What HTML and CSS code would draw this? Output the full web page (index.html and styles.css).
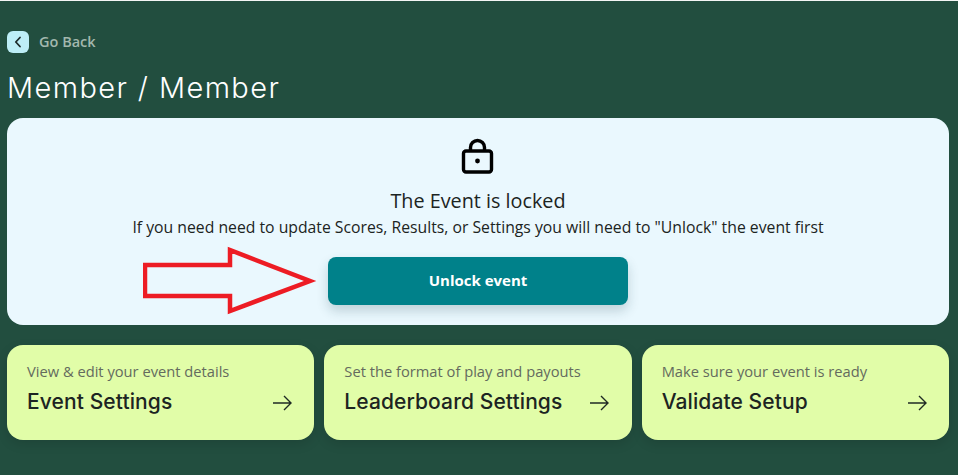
FILE: index.html
```html
<!DOCTYPE html>
<html lang="en">
<head>
    <meta charset="UTF-8">
    <meta name="viewport" content="width=device-width, initial-scale=1.0">
    <title>Member / Member</title>
    <link rel="stylesheet" href="styles.css">
</head>
<body>
    <main>
        <a href="#" class="go-back">
            <span class="back-icon">
                <svg width="10" height="12" viewBox="0 0 10 12"><path d="M7 1.5 2.8 6 7 10.5" fill="none" stroke="#1d2b2b" stroke-width="1.8" stroke-linecap="round" stroke-linejoin="round"/></svg>
            </span>
            Go Back
        </a>
        <h1>Member / Member</h1>

        <section class="locked-panel">
            <svg class="lock-icon" width="34" height="38" viewBox="0 0 34 38">
                <rect x="2.5" y="13" width="28" height="21" rx="2.5" fill="none" stroke="#000" stroke-width="3.4"/>
                <path d="M9.5 13V9.5a7 7 0 0 1 14 0V13" fill="none" stroke="#000" stroke-width="3.4"/>
                <circle cx="16.5" cy="23" r="2.4" fill="#000"/>
            </svg>
            <h2>The Event is locked</h2>
            <p>If you need need to update Scores, Results, or Settings you will need to "Unlock" the event first</p>
            <button class="unlock-btn">Unlock event</button>
            <!-- red arrow drawn over the screenshot -->
            <svg class="red-arrow" width="178" height="70" viewBox="0 0 178 70">
                <path d="M2 19H87V4L167 35 87 65V50H2Z" fill="none" stroke="#ed1c24" stroke-width="4.500" stroke-linejoin="miter"/>
            </svg>
        </section>

        <section class="card-row">
            <a href="#" class="card">
                <span class="card-sub">View &amp; edit your event details</span>
                <span class="card-line">
                    <span class="card-title">Event Settings</span>
                    <svg width="20" height="16" viewBox="0 0 20 16"><path d="M1 8H19M12 1l7 7-7 7" fill="none" stroke="#1f2a24" stroke-width="1.400"/></svg>
                </span>
            </a>
            <a href="#" class="card">
                <span class="card-sub">Set the format of play and payouts</span>
                <span class="card-line">
                    <span class="card-title">Leaderboard Settings</span>
                    <svg width="20" height="16" viewBox="0 0 20 16"><path d="M1 8H19M12 1l7 7-7 7" fill="none" stroke="#1f2a24" stroke-width="1.400"/></svg>
                </span>
            </a>
            <a href="#" class="card">
                <span class="card-sub">Make sure your event is ready</span>
                <span class="card-line">
                    <span class="card-title">Validate Setup</span>
                    <svg width="20" height="16" viewBox="0 0 20 16"><path d="M1 8H19M12 1l7 7-7 7" fill="none" stroke="#1f2a24" stroke-width="1.400"/></svg>
                </span>
            </a>
        </section>
    </main>
</body>
</html>
```
FILE: styles.css
```css
/* Basic reset */
* {
    margin: 0;
    padding: 0;
    box-sizing: border-box;
}

html, body {
    height: 100%;
}

body {
    font-family: 'Open Sans', 'Lato', sans-serif;
    color: #1c2422;
    background-color: #224e3f;
    border-top: 1px solid #f4f6f5;
    overflow: hidden;
}

main {
    padding: 30px 9px 0 7px;
}

/* Header */
.go-back {
    display: flex;
    align-items: center;
    gap: 10px;
    height: 22px;
    color: #a3b8ae;
    font-size: 14.5px;
    font-weight: 600;
    line-height: 20px;
    text-decoration: none;
}

.back-icon {
    display: flex;
    align-items: center;
    justify-content: center;
    width: 22px;
    height: 22px;
    border-radius: 6px;
    background-color: #bdeef7;
}

h1 {
    margin-top: 17px;
    font-family: 'Inter', sans-serif;
    font-size: 29px;
    font-weight: 300;
    letter-spacing: 1.4px;
    line-height: 36px;
    color: #fff;
}

/* Locked panel */
.locked-panel {
    position: relative;
    display: flex;
    flex-direction: column;
    align-items: center;
    height: 207px;
    margin-top: 12px;
    padding-top: 20px;
    border-radius: 16px;
    background-color: #eaf8fe;
}

.lock-icon {
    display: block;
}

.locked-panel h2 {
    margin-top: 14px;
    font-size: 19.8px;
    font-weight: 400;
    line-height: 22px;
}

.locked-panel p {
    margin-top: 5px;
    font-size: 15.75px;
    line-height: 20px;
}

.unlock-btn {
    width: 300px;
    height: 48px;
    margin-top: 20px;
    padding-bottom: 2px;
    border: none;
    border-radius: 8px;
    background-color: #00818a;
    color: #fff;
    font-family: inherit;
    font-size: 15px;
    font-weight: 700;
    box-shadow: 0 6px 12px rgba(20, 60, 70, 0.2);
}

.red-arrow {
    position: absolute;
    left: 136px;
    top: 128px;
}

/* Bottom cards */
.card-row {
    display: grid;
    grid-template-columns: repeat(3, 1fr);
    gap: 10px;
    margin-top: 20px;
}

.card {
    display: block;
    height: 95px;
    padding: 16px 20px 0;
    border-radius: 16px;
    background-color: #e1fda8;
    text-decoration: none;
    color: #1c2422;
    box-shadow: 0 4px 12px rgba(0, 0, 0, 0.12);
}

.card-sub {
    display: block;
    font-size: 14.7px;
    line-height: 20px;
    color: #646b5e;
}

.card-line {
    display: flex;
    justify-content: space-between;
    align-items: center;
    margin-top: 7px;
    padding-right: 2.5px;
}

.card-line svg {
    margin-top: 1px;
}

.card-title {
    font-family: 'Inter', sans-serif;
    font-size: 21px;
    font-weight: 500;
    letter-spacing: 0.1px;
    line-height: 28px;
}
```
